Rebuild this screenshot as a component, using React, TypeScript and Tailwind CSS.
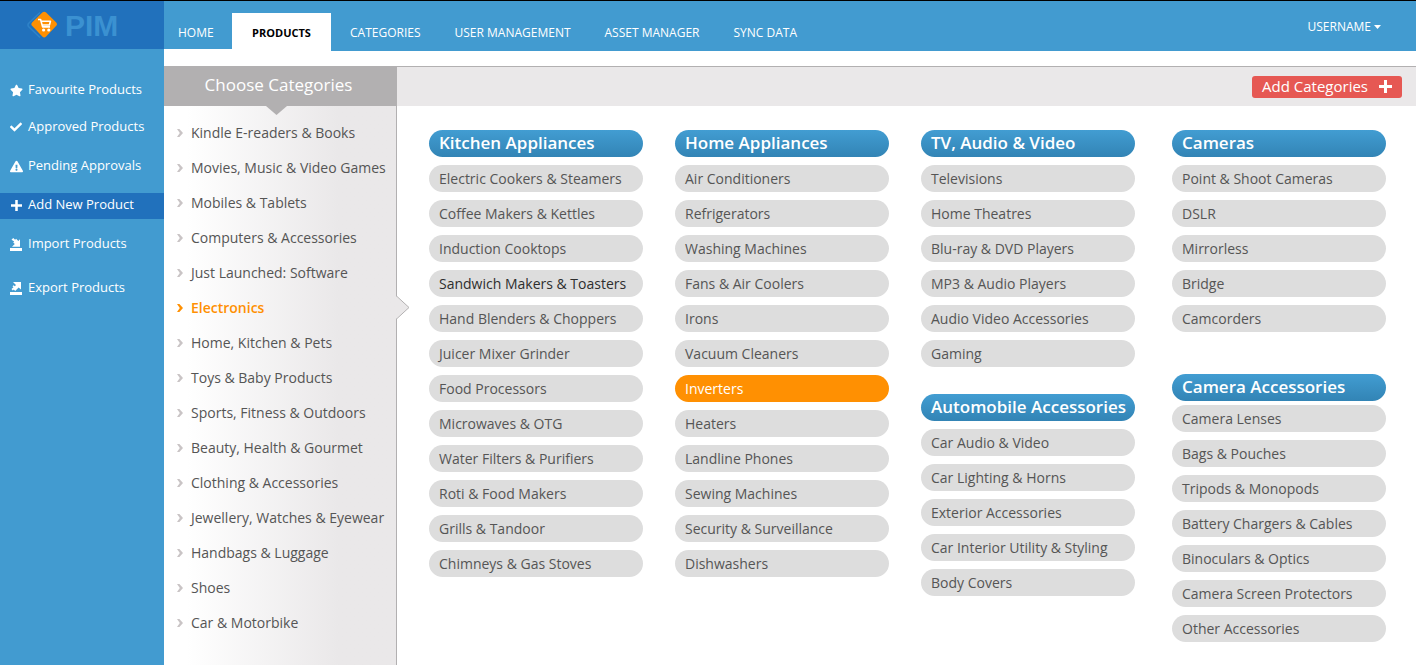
import React from "react";
import { FaStar, FaCheck, FaExclamationTriangle } from "react-icons/fa";

const ImportIcon = () => (
  <svg width="12" height="13" viewBox="0 0 12 13" fill="currentColor" aria-hidden="true">
    <path d="M0 10h12v3H0z" />
    <path d="M1.500 1.800 3.200 0l1.900 1.700 1-.9 2.200 2.300L10 1.200v7.600H2L4.800 6l-1.600-1.400 1-1z" />
  </svg>
);

const ExportIcon = () => (
  <svg width="12" height="13" viewBox="0 0 12 13" fill="currentColor" aria-hidden="true">
    <path d="M0 10h12v3H0z" />
    <path d="M3 0h8v7.600L8.600 5.400 5.200 8.900 3.800 7.600l-1 .9L1.500 7l2-1.800-1-1 1.100-1 1.200 1L6 2.900z" />
  </svg>
);

const PlusIcon = ({ size }: { size: number }) => (
  <svg width={size} height={size} viewBox="0 0 13 13" fill="currentColor" aria-hidden="true">
    <path d="M5 0h3v5h5v3H8v5H5V8H0V5h5z" />
  </svg>
);

const Chevron = () => (
  <svg width="6" height="8" viewBox="0 0 6 8" fill="currentColor" aria-hidden="true">
    <path d="M0 0h2.400L6 4 2.400 8H0l2.800-4z" />
  </svg>
);

const Logo = () => (
  <svg width="30" height="28" viewBox="0 0 30 28" aria-hidden="true">
    <path d="M13 1.500 1.500 12.500q-1 1.500 0 3L13 26.500" fill="none" stroke="#2f83c8" strokeWidth="1.500" />
    <path
      d="M15.300 1.500q1.900-1.700 3.800 0l9.900 9.800q1.900 1.900 0 3.800l-9.900 10.500q-1.900 1.700-3.800 0l-10-10.500q-1.900-1.900 0-3.800z"
      fill="#ff9002"
    />
    <path
      d="M11 8.500h2.600l2 7.400h7.400M14.800 10.200h8.600l-1 3.800h-6.800"
      fill="none"
      stroke="#fff"
      strokeWidth="1.600"
      strokeLinejoin="round"
    />
    <circle cx="16.600" cy="19" r="1.600" fill="#fff" />
    <circle cx="21.800" cy="19" r="1.600" fill="#fff" />
  </svg>
);

const sideLinks = [
  { label: "Favourite Products", icon: <FaStar size={13} />, space: "", active: false },
  { label: "Approved Products", icon: <FaCheck size={12} />, space: "mt-[11px]", active: false },
  { label: "Pending Approvals", icon: <FaExclamationTriangle size={13} />, space: "mt-[13px]", active: false },
  { label: "Add New Product", icon: <PlusIcon size={11} />, space: "mt-[13px]", active: true },
  { label: "Import Products", icon: <ImportIcon />, space: "mt-[13px]", active: false },
  { label: "Export Products", icon: <ExportIcon />, space: "mt-[18px]", active: false },
];

const navLinks = ["CATEGORIES", "USER MANAGEMENT", "ASSET MANAGER", "SYNC DATA"];

const categories = [
  "Kindle E-readers & Books",
  "Movies, Music & Video Games",
  "Mobiles & Tablets",
  "Computers & Accessories",
  "Just Launched: Software",
  "Electronics",
  "Home, Kitchen & Pets",
  "Toys & Baby Products",
  "Sports, Fitness & Outdoors",
  "Beauty, Health & Gourmet",
  "Clothing & Accessories",
  "Jewellery, Watches & Eyewear",
  "Handbags & Luggage",
  "Shoes",
  "Car & Motorbike",
];

const kitchen = [
  "Electric Cookers & Steamers",
  "Coffee Makers & Kettles",
  "Induction Cooktops",
  "Sandwich Makers & Toasters",
  "Hand Blenders & Choppers",
  "Juicer Mixer Grinder",
  "Food Processors",
  "Microwaves & OTG",
  "Water Filters & Purifiers",
  "Roti & Food Makers",
  "Grills & Tandoor",
  "Chimneys & Gas Stoves",
];
const home = [
  "Air Conditioners",
  "Refrigerators",
  "Washing Machines",
  "Fans & Air Coolers",
  "Irons",
  "Vacuum Cleaners",
  "Inverters",
  "Heaters",
  "Landline Phones",
  "Sewing Machines",
  "Security & Surveillance",
  "Dishwashers",
];
const tv = [
  "Televisions",
  "Home Theatres",
  "Blu-ray & DVD Players",
  "MP3 & Audio Players",
  "Audio Video Accessories",
  "Gaming",
];
const auto = [
  "Car Audio & Video",
  "Car Lighting & Horns",
  "Exterior Accessories",
  "Car Interior Utility & Styling",
  "Body Covers",
];
const cameras = ["Point & Shoot Cameras", "DSLR", "Mirrorless", "Bridge", "Camcorders"];
const cameraAccessories = [
  "Camera Lenses",
  "Bags & Pouches",
  "Tripods & Monopods",
  "Battery Chargers & Cables",
  "Binoculars & Optics",
  "Camera Screen Protectors",
  "Other Accessories",
];

function pillStyle(item: string) {
  if (item === "Inverters") return "bg-[#ff9002] text-white";
  if (item === "Sandwich Makers & Toasters") return "bg-[#dddddd] text-[#2e2e2e]";
  return "bg-[#dddddd] text-[#555555]";
}

function Group({ title, items, tight = false }: { title: string; items: string[]; tight?: boolean }) {
  return (
    <section>
      <h2 className="flex h-[27px] items-center rounded-full bg-linear-to-b from-[#429dd2] to-[#3284b5] pb-0.5 pl-2.5 text-[17px] font-semibold whitespace-nowrap text-white">
        {title}
      </h2>
      <ul className={`flex flex-col gap-2 ${tight ? "mt-1" : "mt-2"}`}>
        {items.map((item) => (
          <li key={item}>
            <a href="#" className={`flex h-[27px] items-center rounded-full pl-2.5 text-sm whitespace-nowrap ${pillStyle(item)}`}>
              {item}
            </a>
          </li>
        ))}
      </ul>
    </section>
  );
}

export default function App() {
  return (
    <div className="flex min-h-screen border-t border-black bg-white font-['Open_Sans',sans-serif]">
      <aside className="w-[164px] shrink-0 bg-[#429bd0] text-white">
        <a href="#" className="flex h-12 items-center gap-2 bg-[#2171bc] pl-[27px]">
          <Logo />
          <span className="pt-0.5 font-['Liberation_Sans',sans-serif] text-[30px] leading-none font-bold text-[#3b91d1]">PIM</span>
        </a>
        <ul className="mt-[29px] text-[13px]">
          {sideLinks.map((link) => (
            <li key={link.label} className={link.space}>
              <a href="#" className={`flex h-[26px] items-center gap-1 pb-0.5 pl-2 ${link.active ? "bg-[#2171bc]" : ""}`}>
                <span className="flex w-4 justify-center">{link.icon}</span>
                {link.label}
              </a>
            </li>
          ))}
        </ul>
      </aside>

      <div className="flex min-w-0 flex-1 flex-col">
        <header className="flex h-[50px] shrink-0 items-stretch justify-between bg-[#429bd0] pr-[35px] text-xs text-white">
          <nav className="flex items-stretch">
            <a href="#" className="flex w-[68px] items-center border-b-2 border-white pt-4 pl-3.5">
              HOME
            </a>
            <a href="#" className="mt-3 flex w-[99px] items-center justify-center bg-white pt-0.5 text-[11px] font-bold text-black">
              PRODUCTS
            </a>
            <div className="flex items-center gap-[34px] pt-3.5 pl-[19px]">
              {navLinks.map((n) => (
                <a key={n} href="#">
                  {n}
                </a>
              ))}
            </div>
          </nav>
          <button className="flex items-center gap-[3px] pt-0.5">
            USERNAME
            <svg width="7" height="4" viewBox="0 0 7 4" fill="currentColor" aria-hidden="true">
              <path d="M0 0h7L3.500 4z" />
            </svg>
          </button>
        </header>

        <div className="mt-[15px] flex grow border-t border-[#b2b0b1]">
          <div className="flex w-[233px] shrink-0 flex-col">
            <h1 className="relative flex h-[39px] shrink-0 items-center justify-center bg-[#b2b0b1] pr-1 pb-1 text-[17px] text-white">
              Choose Categories
              <svg className="absolute top-full left-[102px]" width="21" height="9" viewBox="0 0 21 9" aria-hidden="true">
                <path d="M0 0h21L10.500 9z" fill="#b2b0b1" />
              </svg>
            </h1>
            <ul className="grow border-r border-[#b2b0b1] bg-linear-to-r from-white from-10% to-[#eae8e9] to-75% pt-[9px] pb-6 text-sm">
              {categories.map((c) => {
                const active = c === "Electronics";
                return (
                  <li key={c} className="relative h-[35px]">
                    <a
                      href="#"
                      className={`flex h-full items-center gap-2 pl-[13px] whitespace-nowrap ${active ? "font-semibold text-[#ff9002]" : "text-[#555555]"}`}
                    >
                      <span className={active ? "text-[#ff9002]" : "text-[#c9c4c5]"}>
                        <Chevron />
                      </span>
                      {c}
                    </a>
                    {active && (
                      <svg className="absolute top-1.5 left-[232px]" width="14" height="23" viewBox="0 0 14 23" aria-hidden="true">
                        <path d="M0 0 13 11.500 0 23z" fill="#eae8e9" />
                        <path d="M.500 0 13 11.500.500 23" fill="none" stroke="#b2b0b1" />
                      </svg>
                    )}
                  </li>
                );
              })}
            </ul>
          </div>

          <main className="min-w-0 flex-1">
            <div className="flex h-[39px] items-center justify-end bg-[#eae8e9] pr-3.5">
              <button className="flex h-[22px] items-center gap-[11px] rounded-[3px] bg-[#e65853] px-2.5 text-[15px] text-white">
                Add Categories
                <PlusIcon size={13} />
              </button>
            </div>
            <div className="grid grid-cols-[214fr_214fr_214fr_219fr] items-start gap-8 pt-6 pr-[30px] pl-8">
              <Group title="Kitchen Appliances" items={kitchen} />
              <Group title="Home Appliances" items={home} />
              <div className="flex flex-col gap-[27px]">
                <Group title="TV, Audio & Video" items={tv} />
                <Group title="Automobile Accessories" items={auto} />
              </div>
              <div className="flex flex-col gap-[42px] pl-[5px]">
                <Group title="Cameras" items={cameras} />
                <Group title="Camera Accessories" items={cameraAccessories} tight />
              </div>
            </div>
          </main>
        </div>
      </div>
    </div>
  );
}
